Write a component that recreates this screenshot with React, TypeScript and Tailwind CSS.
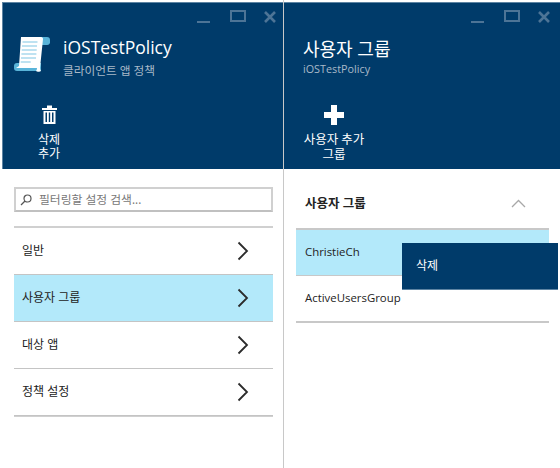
import React from 'react';

const fontStack = "font-['Open_Sans','Noto_Sans_CJK_KR',sans-serif]";

function WindowControls({ className }: { className: string }) {
  return (
    <div className={`flex justify-end h-[22px] pt-[7px] ${className}`}>
      <svg width="80" height="16" viewBox="0 0 80 16" fill="none" stroke="#4d7496">
        <path d="M0 12h13" strokeWidth="2" />
        <rect x="34" y="1" width="14" height="10" strokeWidth="2" />
        <path d="M68 2l10 10M78 2L68 12" strokeWidth="2.6" />
      </svg>
    </div>
  );
}

function ScrollIcon() {
  return (
    <svg width="36" height="36" viewBox="0 0 36 36" className="shrink-0">
      <path d="M26 1h7a3 3 0 0 1 3 3v3a3 3 0 0 1-3 2h-6z" fill="#59b4d9" />
      <path d="M3 27h24v8H3a3 3 0 0 1-3-3v-2a3 3 0 0 1 3-3z" fill="#59b4d9" />
      <path d="M7 1h20c1.500 0 2 1 2 2l-3 29c0 2 1 3 1 3-1 1-4 1-5 0 0 0 1-1 1-3H2l3-2z" fill="#fff" />
      <path d="M8.500 6h15M8 10h15M7.700 14h15M7.400 18h15M7 22h15M6.700 26h10" stroke="#7fc6e4" strokeWidth="1.200" />
    </svg>
  );
}

function TrashIcon() {
  return (
    <svg width="15" height="19" viewBox="0 0 15 19" fill="#fff">
      <path d="M0 3h15v2H0zM5 0.500h5V3H5z" />
      <path d="M1.500 6h12v13h-12zM3.500 7.500v9.500H5V7.500zM6.800 7.500v9.500h1.400V7.500zM10 7.500v9.500h1.500V7.500z" fillRule="evenodd" />
    </svg>
  );
}

function PlusIcon() {
  return (
    <svg width="20" height="20" viewBox="0 0 20 20" fill="#fff">
      <path d="M7 0h6v7h7v6h-7v7H7v-7H0V7h7z" />
    </svg>
  );
}

function Chevron() {
  return (
    <svg width="12" height="20" viewBox="0 0 12 20" fill="none" stroke="#2b2b2b" strokeWidth="1.800">
      <path d="M1.500 1.500L10 10l-8.500 8.500" />
    </svg>
  );
}

function MenuRow({ label, active }: { label: string; active?: boolean }) {
  return (
    <div
      className={`flex items-center justify-between h-[47px] pl-[8px] pr-[24px] border-b border-[#c4c4c4] ${
        active ? 'bg-[#b3e9fa]' : ''
      }`}
    >
      <span className="text-[12px] text-[#222] -mt-[1px]">{label}</span>
      <Chevron />
    </div>
  );
}

export default function App() {
  return (
    <div className={`relative flex w-[560px] h-[468px] bg-white overflow-hidden ${fontStack}`}>
      {/* left blade */}
      <div className="w-[284px] shrink-0 pl-[2px] pt-[2px] border-r border-[#c8c8c8]">
        <div className="h-[167px] bg-[#003b6a] border-t border-l border-[#5d84a3]">
          <WindowControls className="pr-[6px]" />
          <div className="flex items-start pl-[11px] pt-[11px] gap-[13px]">
            <ScrollIcon />
            <div className="-mt-[1px]">
              <div className="text-[17.500px] leading-[24px] text-white">iOSTestPolicy</div>
              <div className="text-[11.700px] leading-[16px] mt-[3px] text-[#a9b9c8]">클라이언트 앱 정책</div>
            </div>
          </div>
          <div className="flex flex-col items-center w-[92px] mt-[27px]">
            <TrashIcon />
            <div className="mt-[9px] text-[12px] leading-[14px] text-white text-center">
              삭제
              <br />
              추가
            </div>
          </div>
        </div>
        <div className="pl-[12px] pr-[10px] pt-[18px]">
          <div className="flex items-center h-[25px] border-2 border-[#d0d0d0] border-b-[#c0c0c0] pl-[4px] gap-[7px]">
            <svg width="12" height="12" viewBox="0 0 12 12" fill="none" stroke="#555" strokeWidth="1.200">
              <circle cx="7.500" cy="4.500" r="3.500" />
              <path d="M5 7L1 11" />
            </svg>
            <span className="text-[11.800px] text-[#777]">필터링할 설정 검색...</span>
          </div>
          <div className="mt-[14px] border-t-2 border-[#d0d0d0]">
            <MenuRow label="일반" />
            <MenuRow label="사용자 그룹" active />
            <MenuRow label="대상 앱" />
            <MenuRow label="정책 설정" />
            <div className="h-px bg-[#d0d0d0]" />
          </div>
        </div>
      </div>

      {/* right blade */}
      <div className="flex-1 pt-[2px]">
        <div className="h-[167px] bg-[#003b6a] border-t border-[#5d84a3]">
          <WindowControls className="pr-[9px]" />
          <div className="pl-[19px] pt-[11px]">
            <div className="text-[18px] leading-[26px] text-white">사용자 그룹</div>
            <div className="text-[10.800px] leading-[14px] text-[#a9b9c8]">iOSTestPolicy</div>
          </div>
          <div className="flex flex-col items-center w-[100px] mt-[29px]">
            <PlusIcon />
          </div>
          <div className="w-[100px] mt-[7px] text-[12.500px] leading-[15px] text-white text-center">
            사용자 추가
            <br />
            그룹
          </div>
        </div>
        <div className="pl-[12px] pr-[11px]">
          <div className="flex items-center justify-between h-[59px] pl-[9px] pr-[23px] pt-[10px]">
            <span className="text-[12.500px] font-bold text-[#222] mt-[2px]">사용자 그룹</span>
            <svg width="15" height="9" viewBox="0 0 15 9" fill="none" stroke="#a8a8a8" strokeWidth="1.300">
              <path d="M1 8l6.500-6.500L14 8" />
            </svg>
          </div>
          <div className="border-t-2 border-[#c8c8c8]">
            <div className="flex items-center h-[46px] pl-[9px] pb-[2px] bg-[#b3e9fa] border-b border-[#c8c8c8] text-[11.400px] text-[#222]">
              ChristieCh
            </div>
            <div className="flex items-center h-[47px] pl-[9px] pb-[2px] border-b-2 border-[#c8c8c8] text-[11.400px] text-[#222]">
              ActiveUsersGroup
            </div>
          </div>
        </div>
      </div>

      {/* context menu */}
      <div className="absolute left-[402px] top-[243px] w-[156px] h-[47px] flex items-center pl-[14px] bg-[#003b6a] border-b border-[#5d84a3] text-[12px] text-white">
        삭제
      </div>
    </div>
  );
}
